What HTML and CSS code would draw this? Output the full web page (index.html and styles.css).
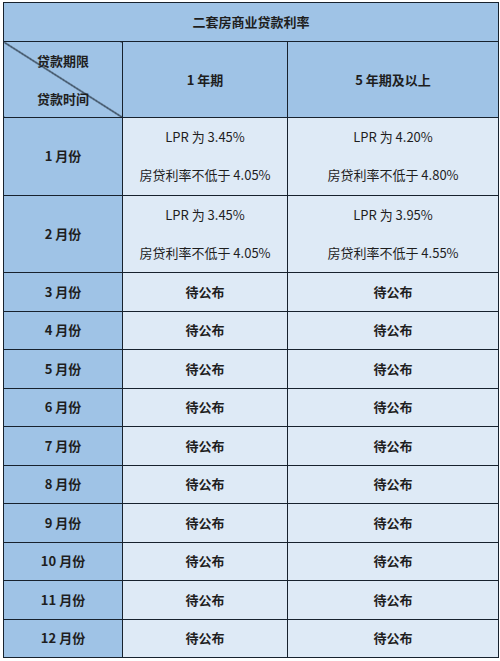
FILE: index.html
```html
<!DOCTYPE html>
<html lang="zh">
<head>
<meta charset="utf-8">
<title>二套房商业贷款利率</title>
<link rel="stylesheet" href="styles.css">
</head>
<body>
<table class="rates">
  <colgroup>
    <col class="c1"><col class="c2"><col class="c3">
  </colgroup>
  <tr class="r-title"><th colspan="3" class="head">二套房商业贷款利率</th></tr>
  <tr class="r-head">
    <th class="head corner"><div class="corner-in"><span>贷款期限</span><span>贷款时间</span></div></th>
    <th class="head">1 年期</th>
    <th class="head">5 年期及以上</th>
  </tr>
  <tr class="r-big">
    <th class="head">1 月份</th>
    <td><div class="two"><span>LPR 为 3.45%</span><span>房贷利率不低于 4.05%</span></div></td>
    <td><div class="two"><span>LPR 为 4.20%</span><span>房贷利率不低于 4.80%</span></div></td>
  </tr>
  <tr class="r-big">
    <th class="head">2 月份</th>
    <td><div class="two"><span>LPR 为 3.45%</span><span>房贷利率不低于 4.05%</span></div></td>
    <td><div class="two"><span>LPR 为 3.95%</span><span>房贷利率不低于 4.55%</span></div></td>
  </tr>
  <tr class="r"><th class="head">3 月份</th><td class="b">待公布</td><td class="b">待公布</td></tr>
  <tr class="r"><th class="head">4 月份</th><td class="b">待公布</td><td class="b">待公布</td></tr>
  <tr class="r"><th class="head">5 月份</th><td class="b">待公布</td><td class="b">待公布</td></tr>
  <tr class="r"><th class="head">6 月份</th><td class="b">待公布</td><td class="b">待公布</td></tr>
  <tr class="r"><th class="head">7 月份</th><td class="b">待公布</td><td class="b">待公布</td></tr>
  <tr class="r"><th class="head">8 月份</th><td class="b">待公布</td><td class="b">待公布</td></tr>
  <tr class="r"><th class="head">9 月份</th><td class="b">待公布</td><td class="b">待公布</td></tr>
  <tr class="r"><th class="head">10 月份</th><td class="b">待公布</td><td class="b">待公布</td></tr>
  <tr class="r"><th class="head">11 月份</th><td class="b">待公布</td><td class="b">待公布</td></tr>
  <tr class="r"><th class="head">12 月份</th><td class="b">待公布</td><td class="b">待公布</td></tr>
</table>
</body>
</html>
```
FILE: styles.css
```css
html, body {
  margin: 0;
  padding: 0;
  background: #ffffff;
}
body {
  padding: 2px 0 0 3px;
  font-family: "Noto Sans CJK SC", "Noto Sans", sans-serif;
  font-size: 13px;
  color: #1e1e1e;
}
.rates {
  border-collapse: collapse;
  width: 495px;
  table-layout: fixed;
}
.c1 { width: 119px; }
.c2 { width: 165px; }
.c3 { width: 211px; }
.rates th, .rates td {
  border: 1px solid #17222e;
  padding: 0;
  text-align: center;
  vertical-align: middle;
  line-height: 16px;
}
.rates td {
  background: #deeaf6;
  font-weight: 400;
}
.rates td.b {
  font-weight: 700;
}
.head {
  background: #9fc3e6;
  font-weight: 700;
}
.r-title { height: 39px; }
.r-head { height: 76px; }
.r-big { height: 77.5px; }
.r { height: 38.5px; }
.corner {
  background-color: #9fc3e6;
  background-image: linear-gradient(to top right, transparent calc(50% - 0.8px), #17222e calc(50% - 0.3px), #17222e calc(50% + 0.3px), transparent calc(50% + 0.8px));
}
.corner-in {
  display: flex;
  flex-direction: column;
  align-items: center;
  gap: 22px;
}
.two {
  display: flex;
  flex-direction: column;
  align-items: center;
  gap: 22px;
}
```
